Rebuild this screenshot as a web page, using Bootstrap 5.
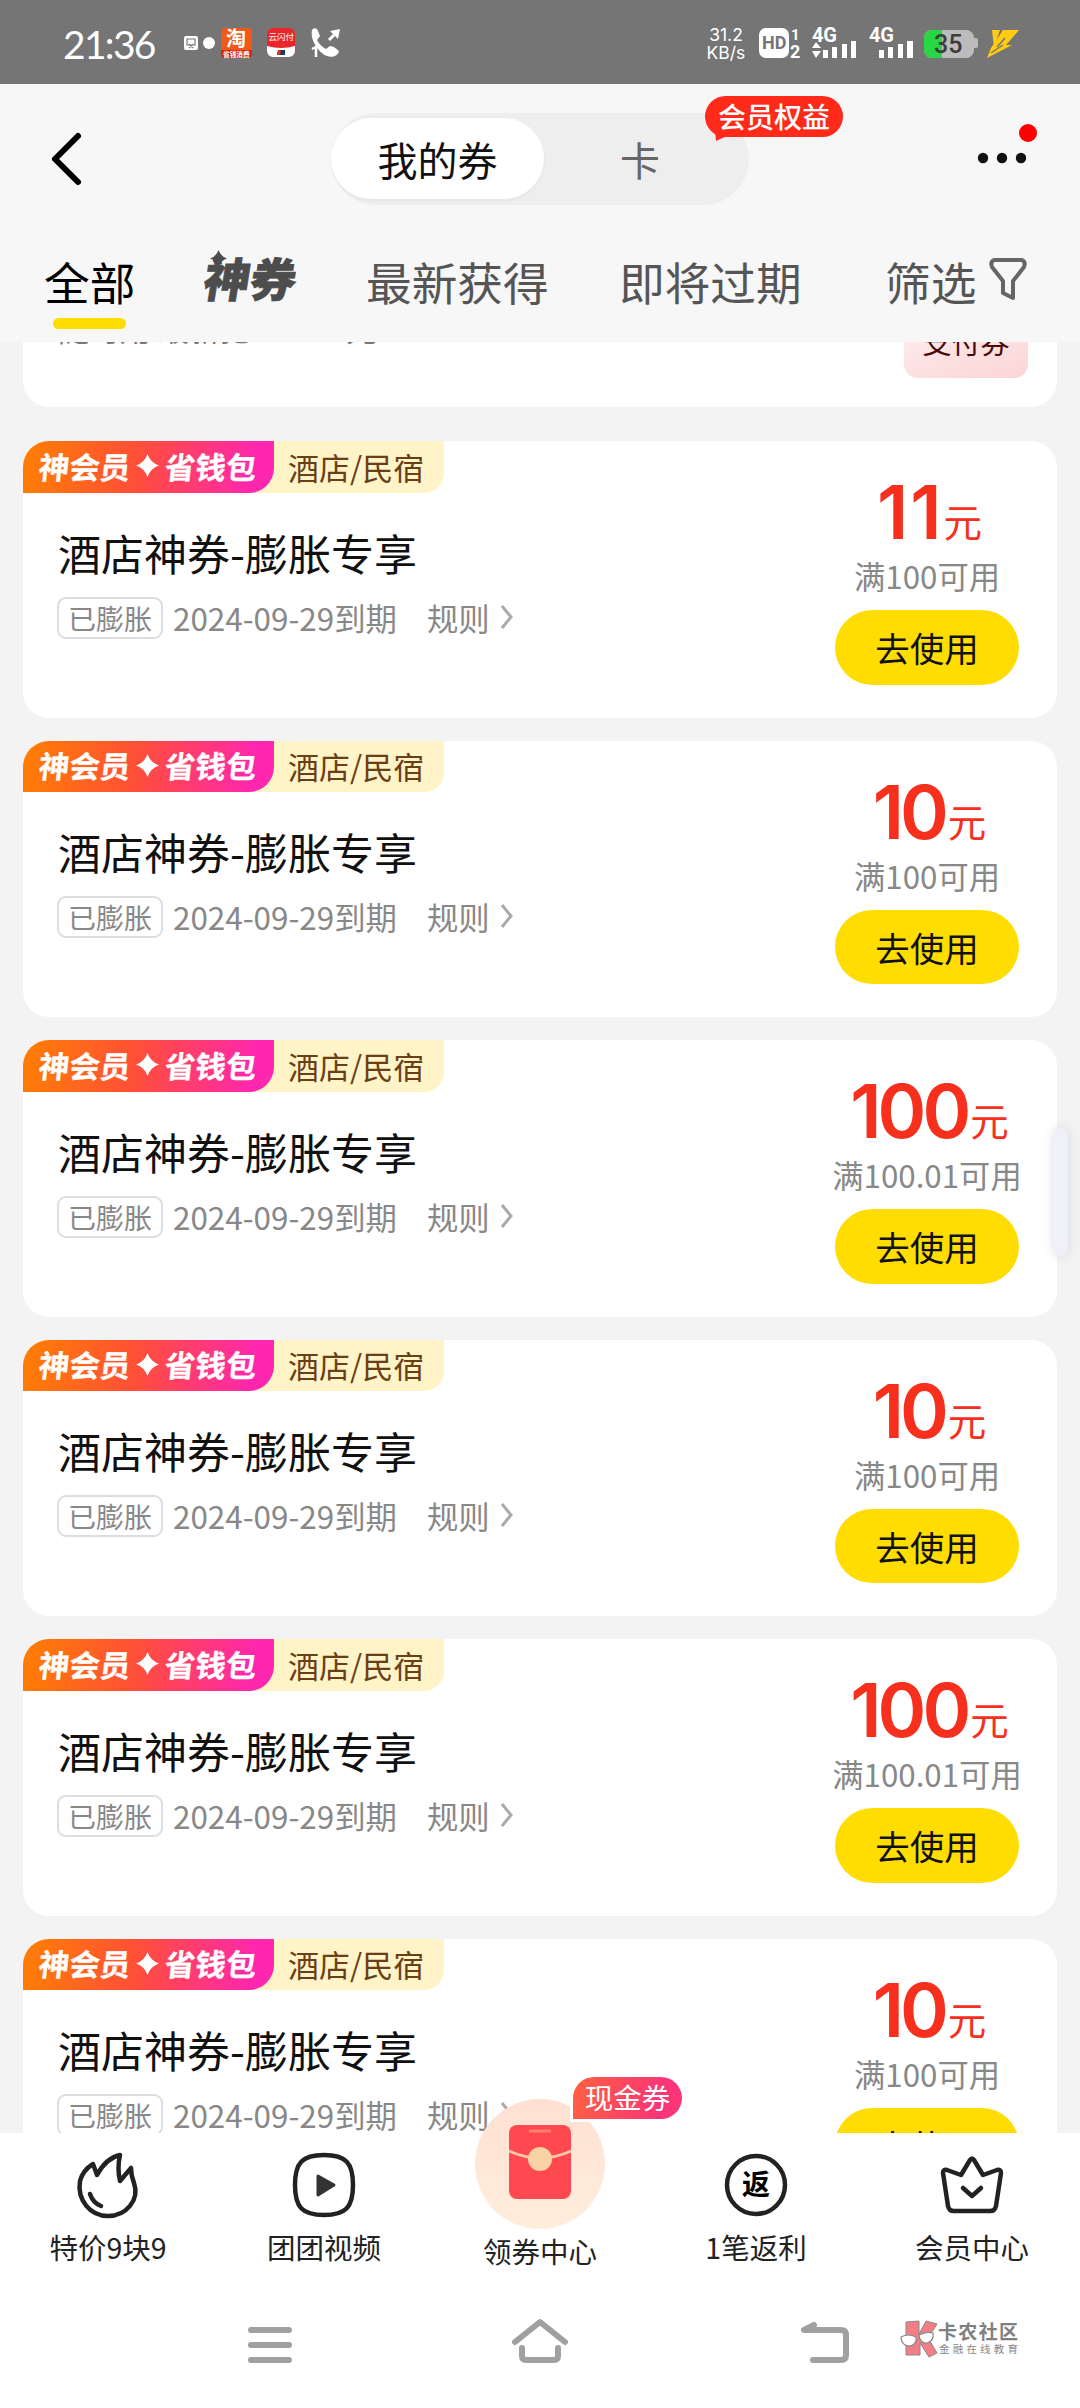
<!DOCTYPE html>
<html lang="zh-CN">
<head>
<meta charset="utf-8">
<meta name="viewport" content="width=device-width, initial-scale=1">
<title>我的券</title>
<link rel="stylesheet" href="https://cdn.jsdelivr.net/npm/bootstrap@5.3.0/dist/css/bootstrap.min.css">
<style>
  body { width:1080px; height:2408px; overflow:hidden; background:#f3f3f3; color:#111;
    font-family:"Noto Sans CJK SC","Noto Sans",sans-serif; line-height:1; }
  svg { display:block; flex:none; overflow:visible; }
  .statusbar { height:84px; background:#757575; color:#fff; padding:3px 60px 0 63px; font-family:Roboto,"Noto Sans CJK SC",sans-serif; }
  .clock { font-size:39px; letter-spacing:-1.7px; font-family:Lato,sans-serif; width:121px; line-height:50px; }
  .rate { font-size:17.5px; line-height:18px; width:46px; text-align:center; font-family:Inter,sans-serif; }
  .signals { margin-left:10px; }
  .head { height:258px; background:#f7f7f7; }
  .titlebar { height:150px; padding:0 46px 0 50px; }
  .seg { width:418px; height:92px; background:#eee; border-radius:46px; padding:5px 0 6px; font-size:40px; left:13px; }
  .seg-on { width:213px; height:81px; background:#fff; border-radius:41px; padding-bottom:0; box-shadow:0 2px 4px #0000000a; }
  .seg-off { color:#666; width:192px; padding-bottom:0; }
  .perk { left:374px; top:-17px; width:138px; height:41px; background:#ff2a1a; color:#fff; border-radius:21px; font-size:28px; font-weight:500; padding-bottom:2px; }
  .perk svg { left:10px; top:34px; }
  .tabs { height:108px; padding:22px 0 0 44px; font-size:45.7px; line-height:50px; color:#555; }
  .tab-all { color:#000; width:161px; }
  .tab-all i { left:9px; top:62px; width:73px; height:11px; border-radius:6px; background:#fd0; }
  .tab-god { font-weight:700; font-size:46px; color:#4d4d4d; width:161px; margin-top:-4px; -webkit-text-stroke:.8px #4d4d4d; }
  .tab-god b { display:inline-block; transform:skewX(-9deg); }
  .tab-god svg { left:5px; top:-2px; }
  .tab-new { width:253px; }
  .tab-soon { width:266px; }
  .tab-filter { width:104px; }
  .feed { height:1791px; overflow:hidden; padding:0 23px; gap:23px; }
  .coupon { background:#fff; border-radius:26px; height:276.5px; flex:none; overflow:hidden; border:0; }
  .cut { height:65px; border-radius:0 0 26px 26px; margin-bottom:11px; }
  .cut-text { font-size:31px; height:31px; color:#777; margin:-27px 0 0 35px; white-space:pre; line-height:25px; }
  .pay { width:124px; height:66px; margin:-30px 29px 0 0; border-radius:14px; font-size:29px; color:#4a0a0a; background:linear-gradient(160deg,#fff0f0,#fbd5d6); padding-top:15px; }
  .ribbon { height:51.5px; width:421px; background:#fff3c8; border-radius:0 0 20px 0; color:#6b3f16; font-size:31px; }
  .ribbon-main { width:251px; height:51.5px; border-radius:0 0 25px 0; background:linear-gradient(97deg,#ff7a08 5%,#ff4f38 45%,#ff26b0 92%); color:#fff; font-weight:700; font-size:30.5px; padding:0 0 2px 16px; -webkit-text-stroke:.3px #fff; }
  .ribbon-main span { transform:skewX(-6deg); }
  .ribbon-main svg { margin:0 6px 0 5px; }
  .ribbon-cat { padding:0 0 1px 14px; }
  .ctitle { font-size:43px; margin:33px 0 0 35px; line-height:52px; }
  .meta { margin:18px 0 0 34px; font-size:31.4px; color:#888; height:43px; padding-top:1px; }
  .swell { width:106px; height:42px; border:2px solid #ddd; border-radius:9px; font-size:28px; margin-right:10px; }
  .rules { margin-left:30px; }
  .deal { width:260px; }
  .amt { color:#f7301d; height:72px; margin:34px 0 0 5px; }
  .num { font-family:Inter,sans-serif; font-weight:600; font-size:74px; letter-spacing:-4px; }
  .num-11 { letter-spacing:2px; margin-right:-3px; }
  .unit { font-size:38.5px; margin-left:3px; position:relative; top:-2px; }
  .cond { font-size:31.3px; color:#888; margin-top:13px; }
  .use { width:184px; height:74.5px; border-radius:38px; background:#fd0; color:#111; font-size:34.5px; margin-top:19px; padding:0; border:0; }
  .dock { height:167px; background:#fff; position:relative; z-index:2; font-size:28.5px; color:#222; padding-top:19px; }
  .dock > div { width:216px; }
  .dock svg { margin-bottom:15px; }
  .packet { left:42px; top:-54px; }
  .packet-label { top:85px; }
  .bonus { left:141px; top:-75px; width:109px; height:42px; border-radius:21px 21px 21px 0; background:linear-gradient(100deg,#ff6040,#fb3578 80%); color:#fff; font-size:28.5px; padding-bottom:1px; box-shadow:0 0 0 3px #fff; }
  .sysnav { height:108px; background:#fff; position:relative; }
  .thumb { left:1053px; top:1128px; width:15px; height:128px; border-radius:8px; background:#f0f1f8; box-shadow:0 0 10px #b9bccb80; z-index:3; }
  .brand { left:898px; top:16px; }
</style>
<script src="https://cdn.jsdelivr.net/npm/bootstrap@5.3.0/dist/js/bootstrap.bundle.min.js"></script>
</head>
<body class="d-flex flex-column position-relative">
<div class="statusbar d-flex align-items-center flex-shrink-0">
  <div class="clock">21:36</div>
  <svg width="162" height="34" viewBox="0 0 162 34">
    <rect y="9" width="14" height="14" rx="2" fill="#fff"/><path d="M3 12h8v6H3zM5 21l4-4M9 21l-4-4" stroke="#757575" stroke-width="1.2" fill="none"/>
    <circle cx="25" cy="16" r="6" fill="#fff"/>
    <rect x="37" y="1" width="31" height="30" rx="4" fill="#ef5a18"/><path d="M37 23h31v4a4 4 0 0 1-4 4H41a4 4 0 0 1-4-4z" fill="#d3261a"/>
    <text x="42" y="19" font-size="20" font-weight="700" fill="#fff" font-family="Noto Sans CJK SC">淘</text><text x="39" y="29.500" font-size="6.700" font-weight="700" fill="#fff" font-family="Noto Sans CJK SC">省钱消费</text>
    <rect x="83" y="1" width="28" height="29" rx="6" fill="#e9262b"/><path d="M83 19q14 4 28 0v5a6 6 0 0 1-6 6H89a6 6 0 0 1-6-6z" fill="#fff"/><path d="M94 23l-1 5h8v-5z" fill="#173d58"/><path d="M94 23l-1 5h3l1-5z" fill="#d32"/>
    <text x="84.500" y="13" font-size="8.500" fill="#fff" font-family="Noto Sans CJK SC">云闪付</text>
    <path d="M128 3c2-3 5-2 6 1l2 5-3 4c2 4 5 7 9 9l4-3c3 0 7 3 9 5-1 5-7 7-12 5-9-4-17-16-15-26z" fill="#fff"/><path d="M145 13l5-5" stroke="#fff" stroke-width="3"/><path d="M146 4l10-2-2 10z" fill="#fff"/><path d="M128 22l4-2v10" stroke="#fff" stroke-width="2.500" fill="none"/>
  </svg>
  <div class="rate ms-auto">31.2<br>KB/s</div>
  <svg class="signals" width="261" height="34" viewBox="759 1 261 34" fill="#fff" font-family="Roboto">
    <rect x="759" y="2" width="30" height="30" rx="7"/><text x="762" y="23" font-size="18" font-weight="700" fill="#757575">HD</text>
    <text x="791" y="14" font-size="15" font-weight="700">1</text><text x="790" y="32" font-size="18" font-weight="700">2</text>
    <text x="812" y="16" font-size="20" font-weight="700" textLength="25">4G</text>
    <path d="M812 22l4-6 5 6zM812 25h9l-5 7zM823 24h5v8h-5zM832 21h5v11h-5zM842 18h5v14h-5zM851 15h5v17h-5zM879 24h5v8h-5zM888 21h5v11h-5zM898 18h5v14h-5zM907 15h6v17h-6z"/>
    <text x="869" y="16" font-size="20" font-weight="700" textLength="25">4G</text>
    <rect x="924" y="4" width="50" height="28" rx="8" fill="#bcbcbc"/><rect x="972" y="12" width="6" height="10" rx="2" fill="#bcbcbc"/><path d="M942 4v28h-10a8 8 0 0 1-8-8V12a8 8 0 0 1 8-8z" fill="#29d643"/>
    <text x="934" y="27" font-size="25" font-weight="500" fill="#3c3c3c">35</text>
    <path d="M992 4h8l-6 17zM1003 4h16l-13 15h6l-25 13 4-10z" fill="#fc1"/><path d="M991 27l12-8M997 21l8-9" stroke="#757575" stroke-width="1.500"/>
  </svg>
</div>

<header class="head flex-shrink-0">
  <div class="titlebar d-flex align-items-center position-relative">
    <svg width="32" height="56" viewBox="0 0 32 56"><path d="M28 5L5 28l23 23" fill="none" stroke="#000" stroke-width="6" stroke-linecap="round" stroke-linejoin="round"/></svg>
    <div class="seg d-flex position-relative mx-auto">
      <div class="seg-on d-flex align-items-center justify-content-center">我的券</div>
      <div class="seg-off d-flex align-items-center justify-content-center">卡</div>
      <div class="perk position-absolute d-flex align-items-center justify-content-center">会员权益
        <svg class="position-absolute" width="16" height="12" viewBox="0 0 16 12"><path d="M0 0l1 11 11-5z" fill="#ff2a1a"/></svg></div>
    </div>
    <svg width="62" height="64" viewBox="0 0 62 64"><g fill="#111"><circle cx="11" cy="31" r="5.200"/><circle cx="30" cy="31" r="5.200"/><circle cx="49" cy="31" r="5.200"/></g><circle cx="56" cy="6" r="9" fill="red"/></svg>
  </div>
  <nav class="tabs d-flex">
    <span class="tab-all position-relative">全部<i class="position-absolute"></i></span>
    <span class="tab-god position-relative"><b>神券</b>
      <svg class="position-absolute" width="17" height="17" viewBox="0 0 24 24"><path d="M12 0q3 9 12 12-9 3-12 12Q9 15 0 12 9 9 12 0z" fill="#4d4d4d"/></svg></span>
    <span class="tab-new">最新获得</span>
    <span class="tab-soon">即将过期</span>
    <span class="tab-filter">筛选</span>
    <svg width="38" height="44" viewBox="0 -1 38 44"><path d="M5 3h28q4 2 2 7L24 24v17l-10-5V24L3 10Q1 5 5 3z" fill="none" stroke="#666" stroke-width="4" stroke-linejoin="round"/></svg>
  </nav>
</header>

<main class="feed d-flex flex-column flex-shrink-0" id="feed">
  <section class="coupon cut d-flex justify-content-between">
    <div class="cut-text">随时用 最新抢 0.1-50元</div>
    <div class="pay text-center">支付券</div>
  </section>
</main>

<footer class="dock d-flex flex-shrink-0 text-center">
  <div class="d-flex flex-column align-items-center">
    <svg width="64" height="66" viewBox="0 0 64 66" fill="none" stroke="#222" stroke-width="4.500" stroke-linecap="round" stroke-linejoin="round"><path d="M17 12l4 11Q30 6 44 3q-3 13 0 26l11-13q0 8 3 15c6 17-8 33-26 33S1 48 4 29q3-11 13-17zM14 42q3 9 11 12"/></svg>特价9块9</div>
  <div class="d-flex flex-column align-items-center">
    <svg width="64" height="66" viewBox="0 0 64 66"><path d="M32 3c22 0 29 8 29 30s-7 30-29 30S3 55 3 33 10 3 32 3z" fill="none" stroke="#222" stroke-width="4.500"/><path d="M26 24l16 9-16 10z" fill="#333" stroke="#333" stroke-width="3" stroke-linejoin="round"/></svg>团团视频</div>
  <div class="position-relative">
    <svg class="packet position-absolute" width="132" height="132" viewBox="0 0 132 132">
      <defs><linearGradient id="halo" x2="0" y2="1"><stop stop-color="#ffe0d2"/><stop offset="1" stop-color="#ffeedd"/></linearGradient></defs>
      <circle cx="66" cy="66" r="65" fill="url(#halo)"/><rect x="35" y="27" width="62" height="74" rx="8" fill="#ff4850"/><path d="M55 33h22" stroke="#ff8070" stroke-width="3"/><path d="M35 53q31 14 62 0" fill="none" stroke="#ffc9a8" stroke-width="3"/><circle cx="66" cy="61" r="12" fill="#f9d3a6"/></svg>
    <div class="packet-label position-absolute w-100">领券中心</div>
    <div class="bonus position-absolute d-flex align-items-center justify-content-center">现金券</div>
  </div>
  <div class="d-flex flex-column align-items-center">
    <svg width="64" height="66" viewBox="0 0 64 66"><circle cx="32" cy="33" r="29" fill="none" stroke="#222" stroke-width="4.500"/><text x="32" y="43" text-anchor="middle" font-size="28" font-weight="700">返</text></svg>1笔返利</div>
  <div class="d-flex flex-column align-items-center">
    <svg width="64" height="66" viewBox="0 0 64 66" fill="none" stroke="#222" stroke-width="4.500" stroke-linecap="round" stroke-linejoin="round"><path d="M3 21l5 33q1 5 6 5h36q5 0 6-5l5-33q0-4-4-3l-14 5L34 8q-2-3-4 0L21 23 7 18q-4-1-4 3zM23 36l9 8 9-8"/></svg>会员中心</div>
</footer>

<div class="sysnav">
  <svg width="1080" height="108" viewBox="0 2300 1080 108" fill="none" stroke="#a0a0a0" stroke-width="6" stroke-linecap="round" stroke-linejoin="round">
    <path d="M251 2330h38M251 2345h38M251 2360h38M515 2342l25-20 25 20M522 2348v8q0 4 4 4h28q4 0 4-4v-8M814 2325l-10 5h37q5 0 5 5v20q0 5-5 5h-28"/>
  </svg>
  <svg class="brand position-absolute" width="122" height="42" viewBox="0 0 122 42">
    <path d="M8 6l13-1v13l7-13 11 3-9 14 9 15-8 4-9-14v12H8z" fill="#f37e86" stroke="#888" stroke-width="1"/><path d="M3 21q7-4 15 0c1 5-2 9-7 9s-8-4-8-9zM21 19q7-4 14-2c1 6-2 9-6 10s-8-3-8-8z" fill="#fff" stroke="#888" stroke-width="1.200"/>
    <text x="40" y="23" font-size="19" font-weight="700" fill="#808080" textLength="80">卡农社区</text><text x="41" y="37" font-size="10.500" fill="#888" textLength="79">金融在线教育</text>
  </svg>
</div>
<div class="thumb position-absolute"></div>

<script>
  const deals = [["11","100"],["10","100"],["100","100.01"],["10","100"],["100","100.01"],["10","100"]];
  document.getElementById("feed").insertAdjacentHTML("beforeend", deals.map(([n,c]) => `
  <article class="coupon d-flex justify-content-between">
    <div>
      <div class="ribbon d-flex align-items-center"><div class="ribbon-main d-flex align-items-center"><span>神会员</span><svg width="23" height="23" viewBox="0 0 24 24"><path d="M12 0q3 9 12 12-9 3-12 12Q9 15 0 12 9 9 12 0z" fill="#fff"/></svg><span>省钱包</span></div><span class="ribbon-cat">酒店/民宿</span></div>
      <div class="ctitle">酒店神券-膨胀专享</div>
      <div class="meta d-flex align-items-center"><span class="swell d-inline-flex align-items-center justify-content-center">已膨胀</span>2024-09-29到期<span class="rules">规则</span>
        <svg class="ms-2" width="20" height="30" viewBox="0 0 20 30"><path d="M4 3l9 11-9 11" fill="none" stroke="#aaa" stroke-width="3"/></svg></div>
    </div>
    <div class="deal d-flex flex-column align-items-center">
      <div class="amt d-flex align-items-baseline"><span class="num num-${n}">${n}</span><span class="unit">元</span></div>
      <div class="cond">满${c}可用</div>
      <button class="use">去使用</button>
    </div>
  </article>`).join(""));
</script>
</body>
</html>
